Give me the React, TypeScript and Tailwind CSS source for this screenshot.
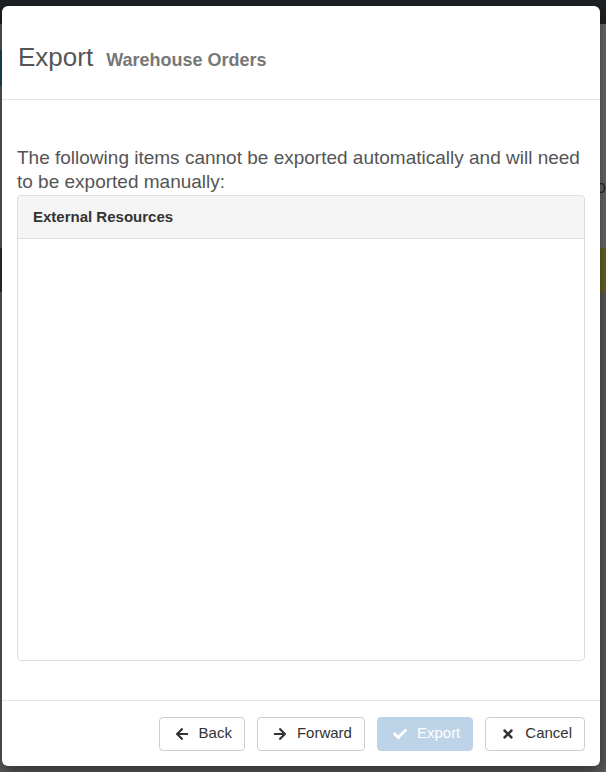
import { FaArrowLeft, FaArrowRight, FaCheck, FaTimes } from "react-icons/fa";

function Btn({
  icon,
  label,
  disabled,
}: {
  icon: React.ReactNode;
  label: string;
  disabled?: boolean;
}) {
  return (
    <button
      disabled={disabled}
      className={
        disabled
          ? "flex items-center gap-[10px] h-[34px] pl-[15px] pr-[12px] rounded-[4px] border border-[#bcd3e8] bg-[#bcd3e8] text-white text-[15px] cursor-not-allowed"
          : "flex items-center gap-[10px] h-[34px] pl-[15px] pr-[12px] rounded-[4px] border border-[#cccccc] bg-white text-[#333] text-[15px]"
      }
    >
      <span className="w-[14px] flex justify-center text-[14px]">{icon}</span>
      {label}
    </button>
  );
}

export default function App() {
  return (
    <div
      className="relative w-[606px] h-[772px] overflow-hidden bg-[#5b5b5b]"
      style={{ fontFamily: '"Liberation Sans", Arial, sans-serif' }}
    >
      {/* page behind the backdrop */}
      <div className="absolute inset-x-0 top-0 h-[24px] bg-[#1e2125]" />
      <div className="absolute left-0 top-[50px] w-[8px] h-[36px] bg-[#1f4a55]" />
      <div className="absolute left-0 top-[248px] w-[8px] h-[44px] bg-[#2a3038]" />
      <div className="absolute right-0 top-[24px] w-[8px] h-[250px] bg-[#6a6a6a]" />
      <div className="absolute right-0 top-[248px] w-[8px] h-[44px] bg-[#6b6324]" />
      <div className="absolute right-0 top-[178px] text-[18px] text-[#2a2a2a] leading-none">o</div>

      {/* modal */}
      <div className="absolute left-[2px] top-[6px] w-[598px] h-[760px] bg-white rounded-[6px] shadow-[0_5px_15px_rgba(0,0,0,0.5)] flex flex-col">
        <div className="h-[94px] border-b border-[#e5e5e5] px-[16px] flex items-baseline pt-[37px] gap-[13px]">
          <h4 className="text-[26px] leading-[1.1] text-[#555]">Export</h4>
          <span className="text-[18px] font-bold text-[#777]">Warehouse Orders</span>
        </div>

        <div className="flex-1 flex flex-col px-[15px] pt-[46px] pb-[39px]">
          <p className="text-[19px] leading-[24px] text-[#555]">
            The following items cannot be exported automatically and will need to be
            exported manually:
          </p>
          <div className="flex-1 mt-[1px] border border-[#dddddd] rounded-[4px] flex flex-col">
            <div className="h-[43px] bg-[#f5f5f5] border-b border-[#dddddd] rounded-t-[4px] px-[15px] flex items-center text-[15px] font-bold text-[#333]">
              External Resources
            </div>
            <div className="flex-1" />
          </div>
        </div>

        <div className="border-t border-[#e5e5e5] h-[66px] px-[15px] flex items-center justify-end gap-[12px]">
          <Btn icon={<FaArrowLeft />} label="Back" />
          <Btn icon={<FaArrowRight />} label="Forward" />
          <Btn icon={<FaCheck />} label="Export" disabled />
          <Btn icon={<FaTimes />} label="Cancel" />
        </div>
      </div>
    </div>
  );
}
